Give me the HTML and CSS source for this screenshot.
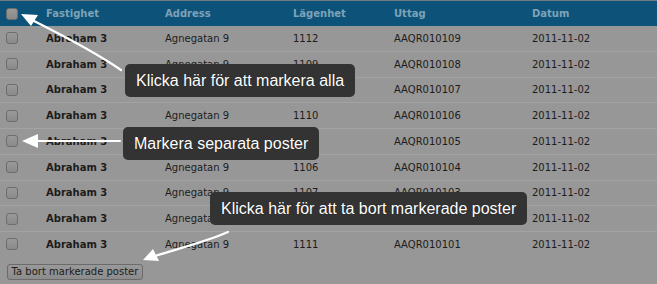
FILE: index.html
```html
<!DOCTYPE html>
<html lang="sv">

<head>
    <meta charset="UTF-8" />
    <title>Uttag</title>
    <link rel="stylesheet" href="styles.css">
</head>

<body>
    <div class="screen">
        <table class="records">
            <thead>
                <tr>
                    <th class="check"><span class="box"></span></th>
                    <th class="c-fast">Fastighet</th>
                    <th class="c-addr">Address</th>
                    <th class="c-lgh">Lägenhet</th>
                    <th class="c-utt">Uttag</th>
                    <th>Datum</th>
                </tr>
            </thead>
            <tbody id="rows"></tbody>
        </table>

        <button class="remove-btn">Ta bort markerade poster</button>

        <!-- Help overlay -->
        <svg class="arrows" width="657" height="284" viewBox="0 0 657 284">
            <g fill="none" stroke="#fff" stroke-width="2.2" stroke-linecap="round">
                <path d="M121 70 C 95 52, 60 34, 32 20" />
                <path d="M120 141 L 34 141" />
                <path d="M228 232 C 205 242, 180 248, 155 256" />
            </g>
            <g fill="#fff">
                <polygon points="21,14 38,15 31,26" />
                <polygon points="22,141 38,134 38,148" />
                <polygon points="143,260 153,249 159,261" />
            </g>
        </svg>

        <div class="tip tip-all">Klicka här för att markera alla</div>
        <div class="tip tip-row">Markera separata poster</div>
        <div class="tip tip-del">Klicka här för att ta bort markerade poster</div>
    </div>

    <script>
        const data = [
            ["1112", "AAQR010109"],
            ["1109", "AAQR010108"],
            ["1108", "AAQR010107"],
            ["1110", "AAQR010106"],
            ["1104", "AAQR010105"],
            ["1106", "AAQR010104"],
            ["1107", "AAQR010103"],
            ["1105", "AAQR010102"],
            ["1111", "AAQR010101"]
        ];

        const body = document.getElementById("rows");
        data.forEach(row => {
            const tr = document.createElement("tr");
            tr.innerHTML =
                '<td class="check"><span class="box"></span></td>' +
                '<td class="name">Abraham 3</td>' +
                '<td>Agnegatan 9</td>' +
                '<td>' + row[0] + '</td>' +
                '<td>' + row[1] + '</td>' +
                '<td>2011-11-02</td>';
            body.appendChild(tr);
        });
    </script>
</body>

</html>
```

FILE: styles.css
```css
body {
    margin: 0;
    background: #979797;
    font-family: "DejaVu Sans", Verdana, sans-serif;
    font-size: 10px;
    color: #1c1c1c;
}

.screen {
    position: relative;
    width: 657px;
    height: 284px;
    overflow: hidden;
}

.records {
    width: 657px;
    border-collapse: collapse;
    table-layout: fixed;
}

.records th {
    height: 25px;
    background: #0d5379;
    border-top: 1px solid #6f7d85;
    color: #7ea2b8;
    font-weight: bold;
    text-align: left;
    padding: 0 0 0 8px;
}

.records td {
    height: 24.75px;
    padding: 0 0 0 8px;
    border-bottom: 1px solid #a3a3a3;
    white-space: nowrap;
}

.records tbody tr:last-child td {
    border-bottom: none;
}

.records .check {
    width: 32px;
    padding-left: 6px;
}

.c-fast { width: 111px; }
.c-addr { width: 120px; }
.c-lgh { width: 93px; }
.c-utt { width: 130px; }

.name {
    font-weight: bold;
}

.box {
    display: block;
    width: 10px;
    height: 10px;
    border: 1px solid #6d6d6d;
    border-radius: 3px;
    background: linear-gradient(#999, #8a8a8a);
}

.remove-btn {
    display: block;
    margin: 7px 0 0 7px;
    width: 136px;
    height: 16px;
    padding: 0;
    font-family: "DejaVu Sans", Verdana, sans-serif;
    font-size: 10px;
    color: #1c1c1c;
    background: linear-gradient(#999, #8c8c8c);
    border: 1px solid #6b6b6b;
    border-radius: 3px;
}

.arrows {
    position: absolute;
    left: 0;
    top: 0;
}

.tip {
    position: absolute;
    background: #333;
    color: #fff;
    font-family: "Liberation Sans", Arial, sans-serif;
    font-size: 16px;
    line-height: 33px;
    padding: 0 11px;
    border-radius: 5px;
    text-shadow: 0 0 1px rgba(0, 0, 0, 0.6);
    white-space: nowrap;
}

.tip-all {
    left: 125px;
    top: 64px;
}

.tip-row {
    left: 123px;
    top: 127px;
}

.tip-del {
    left: 210px;
    top: 192px;
}
```
